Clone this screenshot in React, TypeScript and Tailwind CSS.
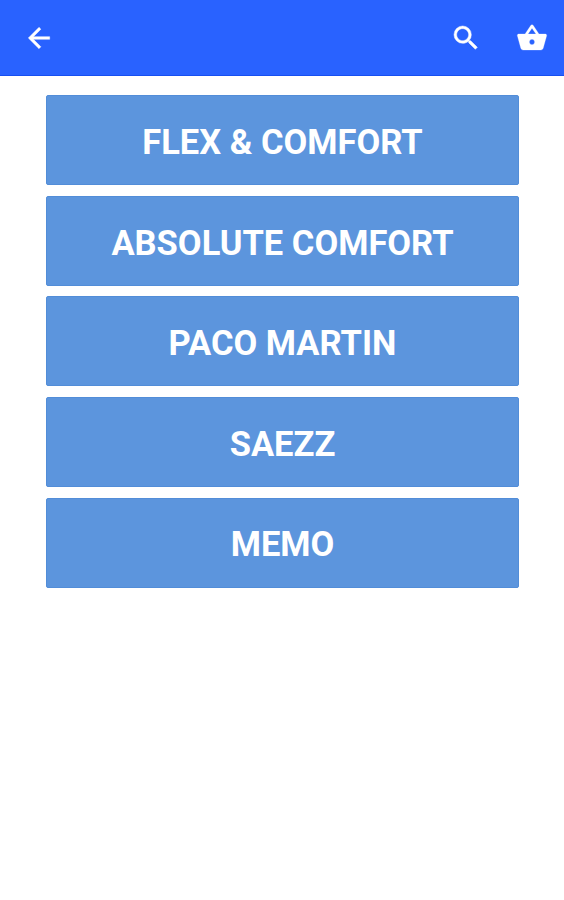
import { MdArrowBack, MdSearch, MdShoppingBasket } from "react-icons/md";

const brands = ["FLEX & COMFORT", "ABSOLUTE COMFORT", "PACO MARTIN", "SAEZZ", "MEMO"];

export default function App() {
  return (
    <div className="min-h-screen bg-white font-['Roboto',sans-serif] text-white">
      <header className="flex h-[76px] items-center border-b border-[#174ff0] bg-[#2962ff] pr-4 pl-[23px]">
        <button aria-label="Back">
          <MdArrowBack className="size-8 [&>path:last-child]:stroke-[0.35]" />
        </button>
        <button aria-label="Search" className="ml-auto">
          <MdSearch className="size-8 [&>path:last-child]:stroke-[0.35]" />
        </button>
        <button aria-label="Basket" className="ml-[34px]">
          <MdShoppingBasket className="size-8 [&>path:last-child]:stroke-[0.2]" />
        </button>
      </header>
      <main className="flex flex-col gap-[10.6px] pt-[19.2px] pr-[45px] pl-[46px]">
        {brands.map((brand) => (
          <button
            key={brand}
            className="flex h-[90px] items-center justify-center rounded-[2px] border border-[#528dd8] bg-[#5c95dd] pt-[5.6px] text-[34.5px] font-bold"
          >
            {brand}
          </button>
        ))}
      </main>
    </div>
  );
}
